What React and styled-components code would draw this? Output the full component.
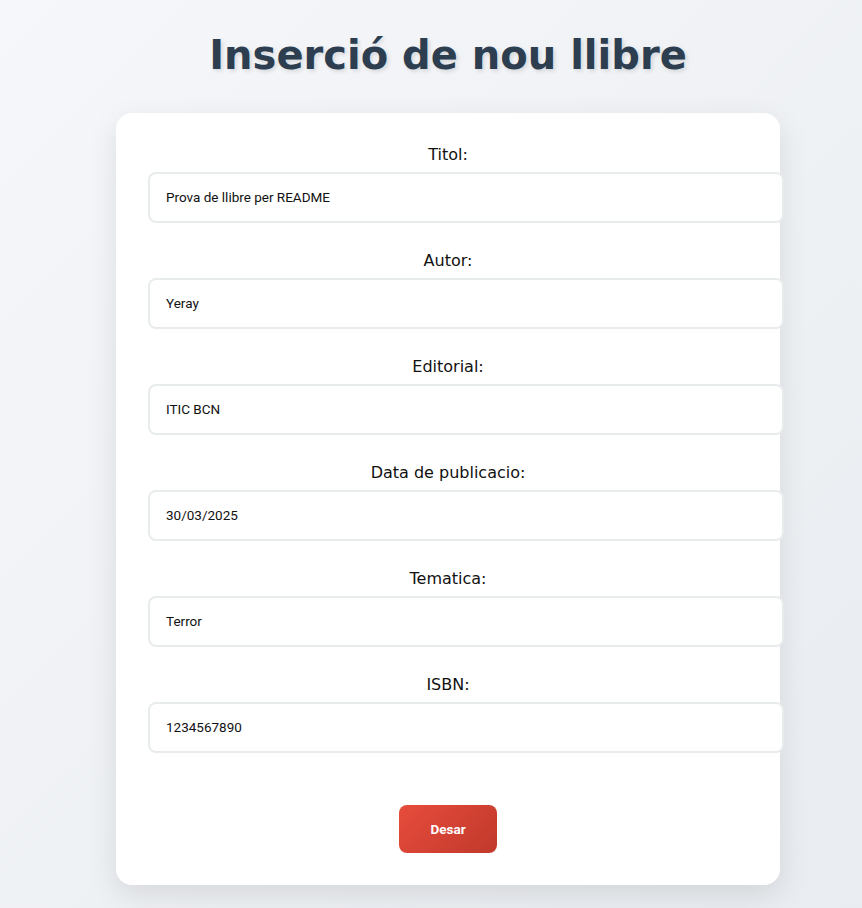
import React from "react";
import styled, { createGlobalStyle } from "styled-components";

const GlobalStyle = createGlobalStyle`
  html, body {
    margin: 0;
    padding: 0;
  }
  body {
    min-height: 908px;
    background: linear-gradient(135deg, #f5f7fa 0%, #e9ecf0 100%);
    font-family: "DejaVu Sans", sans-serif;
  }
`;

const Page = styled.div`
  padding: 0 0 23px 34px;
`;

const Title = styled.h1`
  margin: 0;
  padding-top: 31px;
  height: 113px;
  box-sizing: border-box;
  text-align: center;
  font-family: "DejaVu Sans", sans-serif;
  font-weight: bold;
  font-size: 40px;
  line-height: 48px;
  color: #2c3e50;
  text-shadow: 2px 2px 4px rgba(0, 0, 0, 0.12);
`;

const Card = styled.form`
  width: 600px;
  margin: 0 auto;
  padding: 32px;
  background: #fff;
  border-radius: 16px;
  box-shadow: 0 10px 30px rgba(0, 0, 0, 0.1);
  display: flex;
  flex-direction: column;
`;

const Field = styled.div`
  display: flex;
  flex-direction: column;
  margin-bottom: 28px;
`;

const Label = styled.label`
  text-align: center;
  font-size: 16px;
  line-height: 19px;
  color: #111;
  margin-bottom: 8px;
`;

const Input = styled.input`
  width: 100%;
  height: 15px;
  padding: 16px;
  border: 2px solid #e8ecec;
  border-radius: 8px;
  font-family: "Roboto", sans-serif;
  font-size: 13.5px;
  line-height: 15px;
  color: #111;
  background: #fff;
  outline: none;
`;

const Button = styled.button`
  align-self: center;
  margin-top: 24px;
  width: 98px;
  height: 48px;
  border: none;
  border-radius: 8px;
  background: linear-gradient(135deg, #e74c3c 0%, #c0392b 100%);
  color: #fff;
  font-family: "Roboto", sans-serif;
  font-weight: bold;
  font-size: 13.5px;
  cursor: pointer;
`;

const fields = [
  { label: "Titol:", value: "Prova de llibre per README" },
  { label: "Autor:", value: "Yeray" },
  { label: "Editorial:", value: "ITIC BCN" },
  { label: "Data de publicacio:", value: "30/03/2025" },
  { label: "Tematica:", value: "Terror" },
  { label: "ISBN:", value: "1234567890" },
];

export default function App() {
  return (
    <Page>
      <GlobalStyle />
      <Title>Inserció de nou llibre</Title>
      <Card onSubmit={(e) => e.preventDefault()}>
        {fields.map((f) => (
          <Field key={f.label}>
            <Label>{f.label}</Label>
            <Input defaultValue={f.value} />
          </Field>
        ))}
        <Button type="submit">Desar</Button>
      </Card>
    </Page>
  );
}
